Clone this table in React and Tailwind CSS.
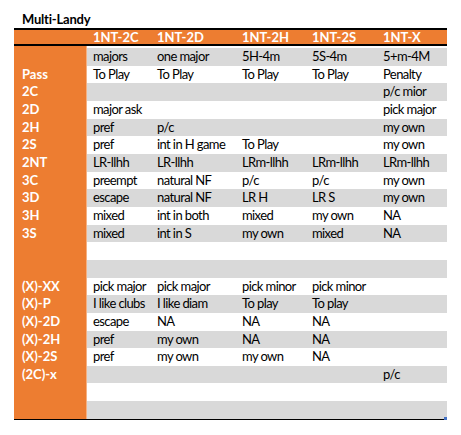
import React from "react";

const cols = ["w-[64px]", "w-[85px]", "w-[70px]", "w-[71px]", "w-[70px]"];
const heads = ["1NT-2C", "1NT-2D", "1NT-2H", "1NT-2S", "1NT-X"];
const rows = [
  ["", "majors", "one major", "5H-4m", "5S-4m", "5+m-4M"],
  ["Pass", "To Play", "To Play", "To Play", "To Play", "Penalty"],
  ["2C", "", "", "", "", "p/c mior"],
  ["2D", "major ask", "", "", "", "pick major"],
  ["2H", "pref", "p/c", "", "", "my own"],
  ["2S", "pref", "int in H game", "To Play", "", "my own"],
  ["2NT", "LR-llhh", "LR-llhh", "LRm-llhh", "LRm-llhh", "LRm-llhh"],
  ["3C", "preempt", "natural NF", "p/c", "p/c", "my own"],
  ["3D", "escape", "natural NF", "LR H", "LR S", "my own"],
  ["3H", "mixed", "int in both", "mixed", "my own", "NA"],
  ["3S", "mixed", "int in S", "my own", "mixed", "NA"],
  ["", "", "", "", "", ""],
  ["", "", "", "", "", ""],
  ["(X)-XX", "pick major", "pick major", "pick minor", "pick minor", ""],
  ["(X)-P", "I like clubs", "I like diam", "To play", "To play", ""],
  ["(X)-2D", "escape", "NA", "NA", "NA", ""],
  ["(X)-2H", "pref", "my own", "NA", "NA", ""],
  ["(X)-2S", "pref", "my own", "my own", "NA", ""],
  ["(2C)-x", "", "", "", "", "p/c"],
  ["", "", "", "", "", ""],
  ["", "", "", "", "", ""],
];

export default function App() {
  return (
    <div className="bg-white w-[461px] h-[435px] pl-[14px] pt-[10px] font-['Lato','Liberation_Sans',sans-serif] text-black">
      <div className="pl-[8px] h-[18px] text-[13px] font-bold leading-[18px] tracking-[-0.2px]">Multi-Landy</div>
      <div className="w-[433px] relative">
        <div className="h-[1.5px] bg-black" />
        <div className="flex h-[14.5px] bg-[#ed7d31] text-white font-bold text-[13px] leading-[14.5px]">
          <div className="w-[73px]" />
          {heads.map((h, i) => (
            <div key={i} className={`${cols[i]} pl-[6px] whitespace-nowrap`}>{h}</div>
          ))}
        </div>
        <div className="h-[1.5px] bg-black" />
        <div className="flex h-[2.5px]">
          <div className="w-[72px] bg-[#ed7d31]" />
          <div className="w-[1px] bg-[#f4b183]" />
          <div className="flex-1 bg-white" />
        </div>
        {rows.map((r, ri) => (
          <div key={ri} className="flex h-[17.67px] leading-[17.67px]">
            <div className="w-[72px] bg-[#ed7d31] pl-[8px] text-white font-bold text-[13px] whitespace-nowrap">{r[0]}</div>
            <div className="w-[1px] bg-[#f4b183]" />
            <div className={`flex flex-1 ${ri % 2 === 0 ? "bg-[#d9d9d9]" : "bg-white"}`}>
              {r.slice(1).map((c, ci) => (
                <div key={ci} className={`${cols[ci]} pl-[6px] text-[13px] whitespace-nowrap tracking-[-0.6px]`}>{c}</div>
              ))}
            </div>
          </div>
        ))}
        <div className="h-[1.5px] bg-black" />
        <div className="absolute right-0 bottom-[0px] w-[3px] h-[3px] bg-[#4472c4]" />
      </div>
    </div>
  );
}
